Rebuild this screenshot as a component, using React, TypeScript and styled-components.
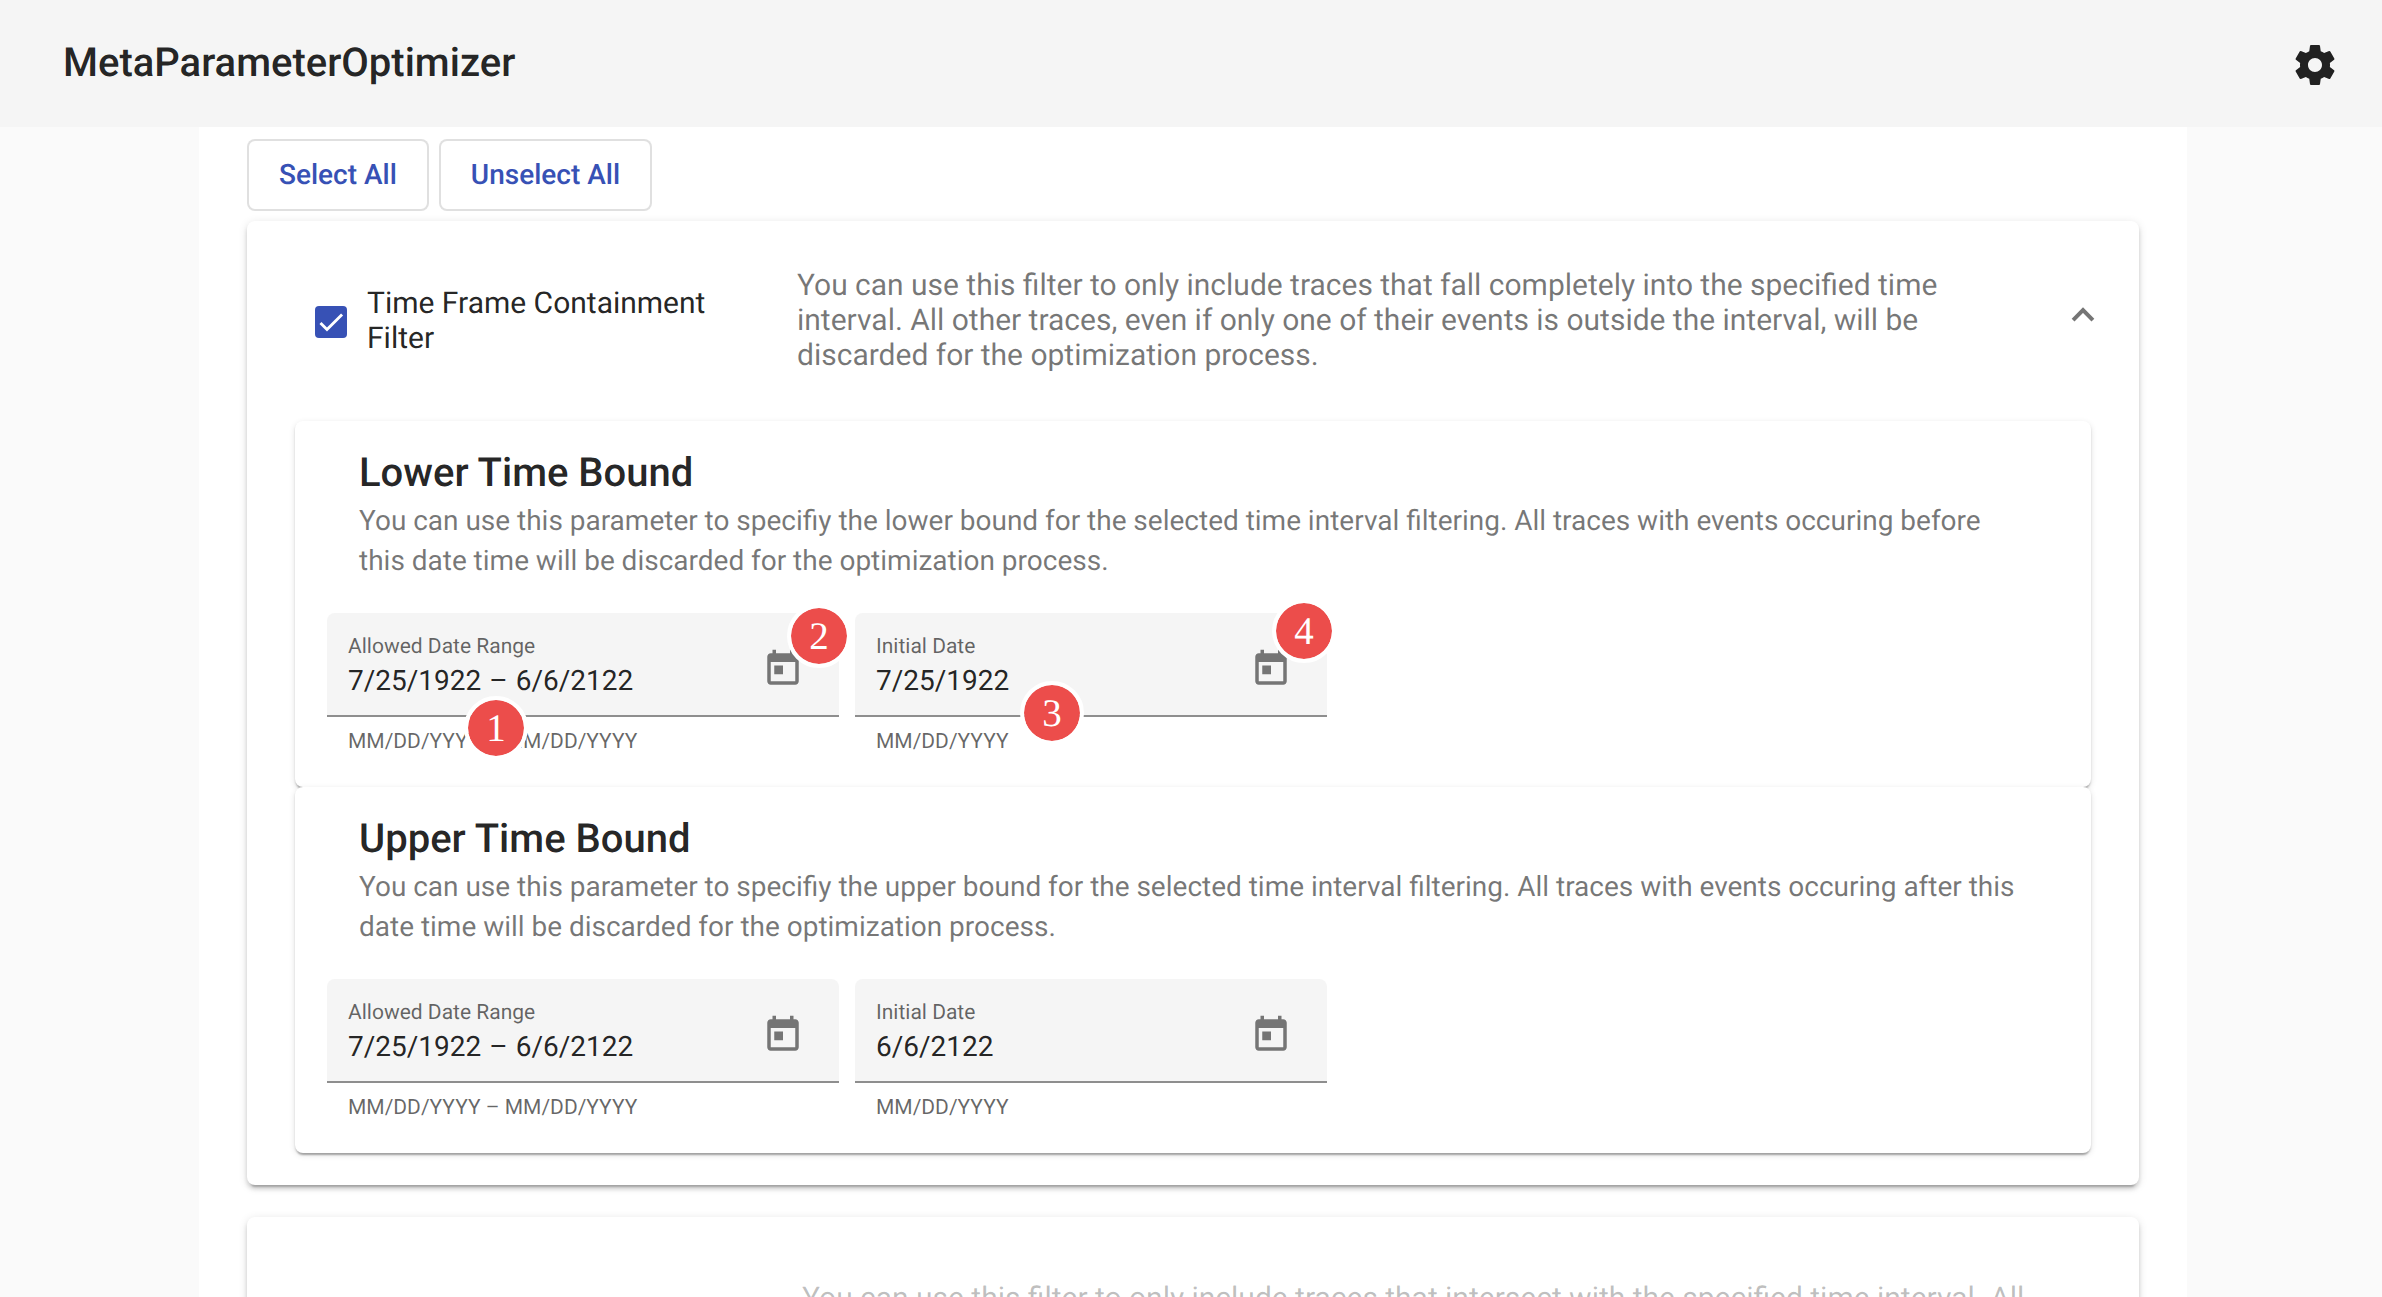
import React from "react";
import styled, { createGlobalStyle } from "styled-components";

const GlobalStyle = createGlobalStyle`
  * { box-sizing: border-box; }
  body { margin: 0; background: #fafafa; overflow: hidden; text-rendering: geometricPrecision; }
  button { text-rendering: inherit; }
`;

const Page = styled.div`
  height: 1297px;
  display: flex;
  flex-direction: column;
  overflow: hidden;
  font-family: Roboto, "Liberation Sans", sans-serif;
  color: rgba(0, 0, 0, 0.87);
`;

const Toolbar = styled.header`
  flex: none;
  height: 127px;
  display: flex;
  align-items: center;
  justify-content: space-between;
  padding: 0 43px 0 63px;
  background: #f5f5f5;
`;

const AppTitle = styled.h1`
  margin: 0 0 1px;
  font-size: 40px;
  font-weight: 500;
  line-height: 64px;
`;

const SettingsButton = styled.button`
  display: flex;
  margin-top: 3px;
  padding: 0;
  border: 0;
  background: none;
  color: #212121;
`;

const Content = styled.main`
  flex: 1;
  min-height: 0;
  width: 1988px;
  margin-left: 199px;
  padding: 12px 48px 0;
  background: #fff;
`;

const Actions = styled.div`
  display: flex;
  gap: 10px;
  margin-bottom: 10px;
`;

const StrokedButton = styled.button`
  height: 72px;
  padding: 0 30px 2px;
  border: 2px solid rgba(0, 0, 0, 0.12);
  border-radius: 8px;
  background: #fff;
  color: #3751b5;
  font: 500 28px Roboto, "Liberation Sans", sans-serif;
`;

const FilterCard = styled.section`
  margin-bottom: 32px;
  padding: 0 48px 32px;
  border-radius: 8px;
  background: #fff;
  box-shadow: 0 6px 2px -4px rgba(0, 0, 0, 0.2), 0 4px 4px 0 rgba(0, 0, 0, 0.14),
    0 2px 10px 0 rgba(0, 0, 0, 0.12);
`;

const FilterHeader = styled.div<{ $collapsed?: boolean }>`
  height: ${(p) => (p.$collapsed ? 233 : 200)}px;
  display: flex;
  align-items: center;
  padding: 0 0 1px ${(p) => (p.$collapsed ? 507 : 20)}px;
  font-size: 30px;
  line-height: 35px;
`;

const Checkbox = styled.span`
  flex: none;
  display: flex;
  width: 32px;
  height: 32px;
  margin: 2px 20px 0 0;
  border-radius: 4px;
  background: #3751b5;
`;

const FilterName = styled.div`
  flex: none;
  width: 360px;
  margin-right: 70px;
`;

const FilterDescription = styled.p<{ $disabled?: boolean }>`
  flex: none;
  width: ${(p) => (p.$disabled ? 1260 : 1200)}px;
  margin: 0;
  word-spacing: -0.08px;
  color: rgba(0, 0, 0, ${(p) => (p.$disabled ? 0.26 : 0.54)});
`;

const Chevron = styled.svg`
  flex: none;
  width: 24px;
  height: 16px;
  margin: 0 -4px 11px auto;
`;

const ParameterCard = styled.article`
  height: 366px;
  padding: 32px 32px 0;
  border-radius: 8px;
  background: #fff;
  box-shadow: 0 4px 2px -2px rgba(0, 0, 0, 0.2), 0 2px 2px 0 rgba(0, 0, 0, 0.14),
    0 2px 6px 0 rgba(0, 0, 0, 0.12);
`;

const ParameterHead = styled.div`
  height: 160px;
  padding: 0 32px;
`;

const ParameterTitle = styled.h2`
  margin: 0 0 8px;
  font-size: 40px;
  font-weight: 500;
  line-height: 40px;
`;

const ParameterText = styled.p`
  margin: 0;
  color: rgba(0, 0, 0, 0.54);
  font-size: 28px;
  line-height: 40px;
  word-spacing: -0.08px;
`;

const Fields = styled.div`
  display: flex;
  gap: 16px;
`;

const Field = styled.div<{ $width: number }>`
  position: relative;
  width: ${(p) => p.$width}px;
`;

const FieldBox = styled.div`
  height: 104px;
  display: flex;
  align-items: center;
  justify-content: space-between;
  padding: 0 35px 0 21px;
  border-bottom: 2px solid #8e8e8e;
  border-radius: 8px 8px 0 0;
  background: #f5f5f5;
`;

const FieldLabel = styled.div`
  margin-top: 4px;
  font-size: 21px;
  line-height: 24px;
  color: rgba(0, 0, 0, 0.6);
`;

const FieldValue = styled.div`
  margin-top: 6px;
  font-size: 28px;
  line-height: 32px;
`;

const RangeDash = styled.span`
  margin: 0 8px;
`;

const Hint = styled.div`
  padding: 13px 21px 0;
  font-size: 21px;
  line-height: 24px;
  color: rgba(0, 0, 0, 0.6);
`;

const CalendarSvg = styled.svg`
  width: 42px;
  height: 42px;
  margin-top: 10px;
  fill: #757575;
`;

const Marker = styled.span<{ $x: number; $y: number }>`
  position: absolute;
  left: ${(p) => p.$x - 32}px;
  top: ${(p) => p.$y - 32}px;
  width: 64px;
  height: 64px;
  display: flex;
  align-items: center;
  justify-content: center;
  border: 4px solid #fff;
  border-radius: 50%;
  background: #ec4d4b;
  background-clip: padding-box;
  color: #fff;
  font: 39px "Liberation Serif", serif;
`;

type MarkerSpec = { n: number; x: number; y: number };
type DateFieldProps = {
  label: string;
  dates: string[];
  hint: string;
  width: number;
  markers?: MarkerSpec[];
};

const SettingsIcon = () => (
  <svg viewBox="0 0 24 24" width="48" height="48" fill="currentColor">
    <path d="M19.43 12.98c.04-.32.07-.64.07-.98s-.03-.66-.07-.98l2.11-1.65c.19-.15.24-.42.12-.64l-2-3.46c-.12-.22-.39-.3-.61-.22l-2.49 1c-.52-.4-1.08-.73-1.69-.98l-.38-2.65C14.46 2.18 14.25 2 14 2h-4c-.25 0-.46.18-.49.42l-.38 2.65c-.61.25-1.17.59-1.69.98l-2.49-1c-.23-.09-.49 0-.61.22l-2 3.46c-.13.22-.07.49.12.64l2.11 1.65c-.04.32-.07.65-.07.98s.03.66.07.98l-2.11 1.65c-.19.15-.24.42-.12.64l2 3.46c.12.22.39.3.61.22l2.49-1c.52.4 1.08.73 1.69.98l.38 2.65c.03.24.24.42.49.42h4c.25 0 .46-.18.49-.42l.38-2.65c.61-.25 1.17-.59 1.69-.98l2.49 1c.23.09.49 0 .61-.22l2-3.46c.12-.22.07-.49-.12-.64l-2.11-1.65zM12 15.5c-1.93 0-3.5-1.57-3.5-3.5s1.57-3.5 3.5-3.5 3.5 1.57 3.5 3.5-1.57 3.5-3.5 3.5z" />
  </svg>
);

const CalendarIcon = () => (
  <CalendarSvg viewBox="0 0 24 24">
    <path d="M19 3h-1V1h-2v2H8V1H6v2H5c-1.11 0-1.99.9-1.99 2L3 19c0 1.1.89 2 2 2h14c1.1 0 2-.9 2-2V5c0-1.1-.9-2-2-2zm0 16H5V8h14v11zM7 10h5v5H7z" />
  </CalendarSvg>
);

const DateField = ({ label, dates, hint, width, markers = [] }: DateFieldProps) => (
  <Field $width={width}>
    <FieldBox>
      <div>
        <FieldLabel>{label}</FieldLabel>
        <FieldValue>
          {dates[0]}
          {dates.length > 1 && (
            <>
              <RangeDash>–</RangeDash>
              {dates[1]}
            </>
          )}
        </FieldValue>
      </div>
      <CalendarIcon />
    </FieldBox>
    <Hint>{hint}</Hint>
    {markers.map((m) => (
      <Marker key={m.n} $x={m.x} $y={m.y}>
        {m.n}
      </Marker>
    ))}
  </Field>
);

type ParameterProps = {
  title: string;
  text: string;
  initial: string;
  rangeMarkers?: MarkerSpec[];
  initialMarkers?: MarkerSpec[];
};

const Parameter = ({ title, text, initial, rangeMarkers, initialMarkers }: ParameterProps) => (
  <ParameterCard>
    <ParameterHead>
      <ParameterTitle>{title}</ParameterTitle>
      <ParameterText>{text}</ParameterText>
    </ParameterHead>
    <Fields>
      <DateField
        label="Allowed Date Range"
        dates={["7/25/1922", "6/6/2122"]}
        hint="MM/DD/YYYY – MM/DD/YYYY"
        width={512}
        markers={rangeMarkers}
      />
      <DateField
        label="Initial Date"
        dates={[initial]}
        hint="MM/DD/YYYY"
        width={472}
        markers={initialMarkers}
      />
    </Fields>
  </ParameterCard>
);

export default function App() {
  return (
    <Page>
      <GlobalStyle />
      <Toolbar>
        <AppTitle>MetaParameterOptimizer</AppTitle>
        <SettingsButton aria-label="Settings">
          <SettingsIcon />
        </SettingsButton>
      </Toolbar>
      <Content>
        <Actions>
          <StrokedButton>Select All</StrokedButton>
          <StrokedButton>Unselect All</StrokedButton>
        </Actions>
        <FilterCard>
          <FilterHeader>
            <Checkbox>
              <svg viewBox="0 0 24 24" width="32" height="32">
                <path d="M4.1,12.7 9,17.6 20.3,6.3" fill="none" stroke="#fff" strokeWidth="2.13" />
              </svg>
            </Checkbox>
            <FilterName>Time Frame Containment Filter</FilterName>
            <FilterDescription>
              You can use this filter to only include traces that fall completely into the specified
              time interval. All other traces, even if only one of their events is outside the
              interval, will be discarded for the optimization process.
            </FilterDescription>
            <Chevron viewBox="0 0 24 16">
              <path d="M2.1 13.1 12 3.2l9.9 9.9" fill="none" stroke="#757575" strokeWidth="4" />
            </Chevron>
          </FilterHeader>
          <Parameter
            title="Lower Time Bound"
            text="You can use this parameter to specifiy the lower bound for the selected time interval filtering. All traces with events occuring before this date time will be discarded for the optimization process."
            initial="7/25/1922"
            rangeMarkers={[
              { n: 1, x: 169, y: 115 },
              { n: 2, x: 492, y: 23 },
            ]}
            initialMarkers={[
              { n: 3, x: 197, y: 100 },
              { n: 4, x: 449, y: 18 },
            ]}
          />
          <Parameter
            title="Upper Time Bound"
            text="You can use this parameter to specifiy the upper bound for the selected time interval filtering. All traces with events occuring after this date time will be discarded for the optimization process."
            initial="6/6/2122"
          />
        </FilterCard>
        <FilterCard>
          <FilterHeader $collapsed>
            <FilterDescription $disabled>
              You can use this filter to only include traces that intersect with the specified time
              interval. All
              <br />
              <br />
              <br />
            </FilterDescription>
          </FilterHeader>
        </FilterCard>
      </Content>
    </Page>
  );
}
